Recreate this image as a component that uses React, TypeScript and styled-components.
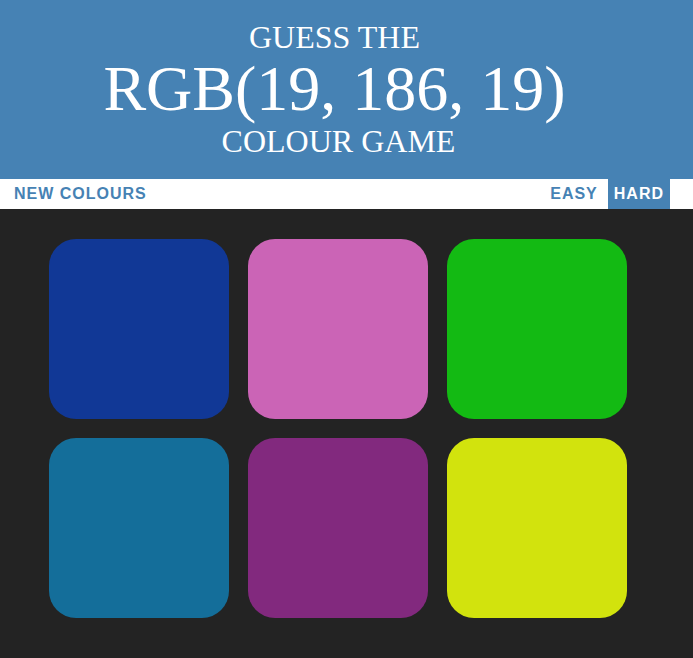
import styled, { createGlobalStyle } from "styled-components";

const GlobalStyle = createGlobalStyle`
  body {
    margin: 0;
    background-color: #232323;
    font-family: "Liberation Serif", "Times New Roman", serif;
  }
`;

const Header = styled.h1`
  margin: 0;
  padding: 20px 24px 20px 0;
  background-color: steelblue;
  color: white;
  text-align: center;
  text-transform: uppercase;
  font-weight: normal;
  font-size: 32px;
  line-height: 1.1;
`;

const ColorDisplay = styled.span`
  display: block;
  font-size: 200%;
  line-height: 1.07;
`;

const GameName = styled.span`
  display: block;
  padding-left: 8px;
`;

const Stripe = styled.div`
  display: flex;
  justify-content: space-between;
  align-items: stretch;
  height: 30px;
  padding: 0 23px 0 8px;
  background-color: white;
`;

const ModeGroup = styled.div`
  display: flex;
  gap: 4px;
`;

const StripeButton = styled.button<{ $selected?: boolean }>`
  border: none;
  margin: 0;
  padding: 0 6px;
  height: 100%;
  font-family: "Liberation Sans", Arial, sans-serif;
  font-size: 16px;
  font-weight: 700;
  letter-spacing: 1px;
  text-transform: uppercase;
  cursor: pointer;
  outline: none;
  background: ${(p) => (p.$selected ? "steelblue" : "none")};
  color: ${(p) => (p.$selected ? "white" : "steelblue")};
  &:hover {
    background: steelblue;
    color: white;
  }
`;

const Board = styled.div`
  display: grid;
  grid-template-columns: repeat(3, 180px);
  gap: 19px;
  padding: 30px 0 40px 49px;
`;

const Square = styled.div<{ $color: string }>`
  width: 180px;
  height: 180px;
  border-radius: 27px;
  background-color: ${(p) => p.$color};
  cursor: pointer;
`;

const colours = [
  "rgb(17, 56, 150)",
  "rgb(203, 100, 182)",
  "rgb(19, 186, 19)",
  "rgb(20, 110, 154)",
  "rgb(130, 41, 126)",
  "rgb(210, 227, 13)",
];

export default function App() {
  return (
    <>
      <GlobalStyle />
      <Header>
        Guess the
        <ColorDisplay>RGB(19, 186, 19)</ColorDisplay>
        <GameName>Colour Game</GameName>
      </Header>
      <Stripe>
        <StripeButton>New Colours</StripeButton>
        <ModeGroup>
          <StripeButton>Easy</StripeButton>
          <StripeButton $selected>Hard</StripeButton>
        </ModeGroup>
      </Stripe>
      <Board>
        {colours.map((c) => (
          <Square key={c} $color={c} />
        ))}
      </Board>
    </>
  );
}
